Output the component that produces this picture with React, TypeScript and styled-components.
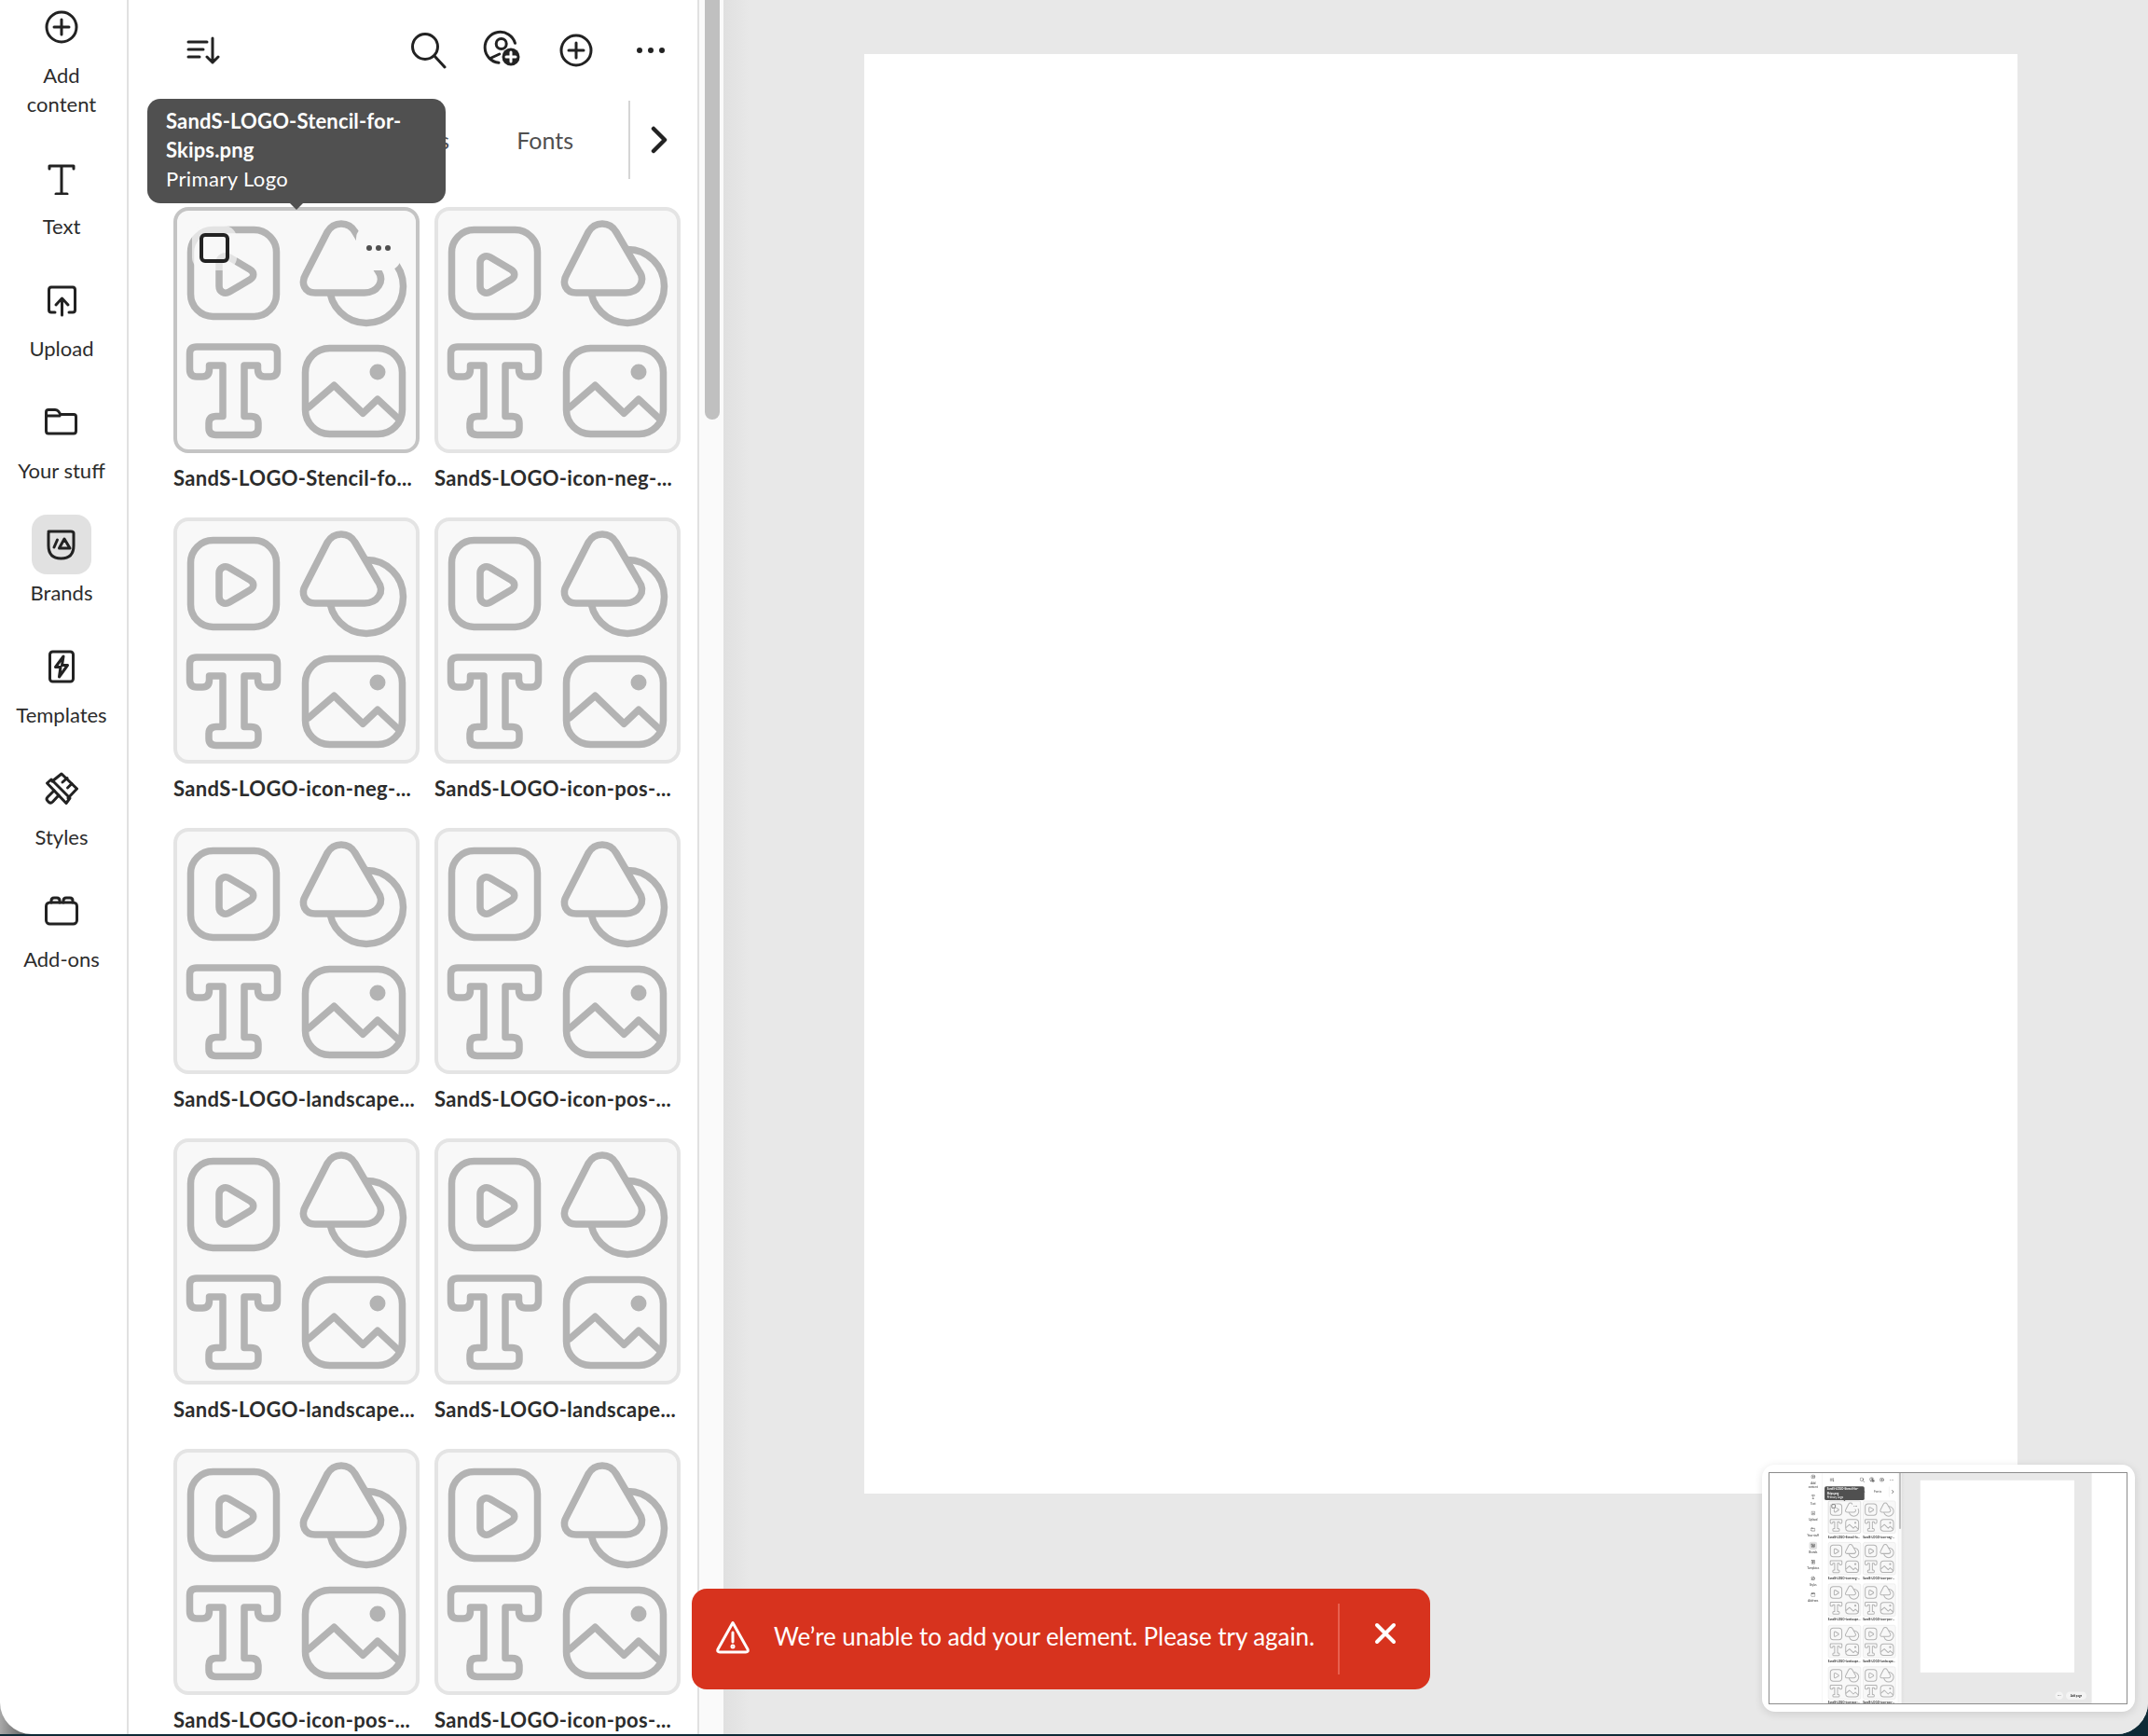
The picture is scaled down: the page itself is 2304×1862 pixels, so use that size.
import React from "react";
import styled, { createGlobalStyle } from "styled-components";

const Global = createGlobalStyle`
  html, body { margin: 0; padding: 0; background: #0e2a36; }
  * { box-sizing: border-box; }
  body { font-family: Lato, "Noto Sans", sans-serif; color: #2c2c2c; }
`;

const Stage = styled.div`
  position: relative;
  width: 2304px;
  height: 1862px;
  overflow: hidden;
  background:
    linear-gradient(90deg, #a8a8a8 0, #6a6a6a 24px, #0e2a36 46px, #0e2a36 100%) top / 100% 1860px no-repeat,
    #0e2a36;
`;
const Window = styled.div`
  position: relative;
  height: 1860px;
  overflow: hidden;
  background: #fff;
  border-radius: 0 0 34px 34px;
`;
const Layout = styled.div`
  display: flex;
  width: 2304px;
  height: 100%;
  background: #fff;
`;
const Rail = styled.nav`
  flex: 0 0 138px;
  padding-right: 4px;
  border-right: 2px solid #e1e1e1;
  display: flex;
  flex-direction: column;
  align-items: center;
  margin-top: -3px;
`;
const RailItem = styled.div`
  width: 100%;
  padding-bottom: 32px;
  display: flex;
  flex-direction: column;
  align-items: center;
`;
const RailIcon = styled.div<{ $active?: boolean }>`
  width: 64px;
  height: 64px;
  display: flex;
  align-items: center;
  justify-content: center;
  border-radius: 16px;
  background: ${(p) => (p.$active ? "#e1e1e1" : "transparent")};
`;
const RailLabel = styled.div`
  margin-top: 4px;
  font-size: 22px;
  line-height: 31px;
  text-align: center;
  color: #2c2c2c;
`;
const Glyph = styled.svg`
  display: block;
  fill: none;
  stroke: #222;
  stroke-width: 3;
  stroke-linecap: round;
  stroke-linejoin: round;
`;
const Panel = styled.section`
  position: relative;
  flex: 0 0 612px;
  border-right: 2px solid #e1e1e1;
  display: flex;
  flex-direction: column;
  overflow: hidden;
`;
const PanelHead = styled.header`
  flex: 0 0 108px;
  display: flex;
  align-items: center;
  padding: 0 33px 0 62px;
`;
const HeadActions = styled.div`
  margin-left: auto;
  display: flex;
  align-items: center;
  gap: 38px;
  & > svg:last-child { margin-left: 7px; }
`;
const Tabs = styled.div`
  flex: 0 0 84px;
  display: flex;
  align-items: center;
  justify-content: flex-end;
  padding-right: 31px;
`;
const TabLabel = styled.span`
  font-size: 25px;
  color: #505050;
  margin-right: 72px;
  &:last-of-type { margin-right: 59px; }
`;
const TabDivider = styled.div`
  align-self: stretch;
  width: 2px;
  background: #d5d5d5;
  margin-right: 21px;
`;
const Grid = styled.div`
  margin-top: 30px;
  padding-left: 48px;
  display: grid;
  grid-template-columns: 264px 264px;
  grid-auto-rows: 333px;
  column-gap: 16px;
`;
const Tile = styled.article`
  min-width: 0;
`;
const Thumb = styled.div<{ $hover?: boolean }>`
  position: relative;
  width: 264px;
  height: 264px;
  border-radius: 16px;
  background: #f8f8f8;
  border: 4px solid ${(p) => (p.$hover ? "#c4c4c4" : "#e4e4e4")};
`;
const ThumbArt = styled.svg`
  position: absolute;
  left: -4px;
  top: -4px;
  fill: none;
  stroke: #b3b3b3;
  stroke-width: 7.5;
  stroke-linejoin: round;
  stroke-linecap: round;
`;
const Halo = styled.div<{ $side: "left" | "right" }>`
  position: absolute;
  top: 16px;
  ${(p) => (p.$side === "left" ? "left: 16px;" : "right: 16px;")}
  width: 48px;
  height: 48px;
  border-radius: 14px;
  display: flex;
  align-items: center;
  justify-content: center;
  background: ${(p) => (p.$side === "left" ? "rgba(248,248,248,.7)" : "#f8f8f8")};
`;
const Check = styled.div`
  width: 32px;
  height: 32px;
  border: 4px solid #222;
  border-radius: 6px;
`;
const MoreDots = styled.div`
  display: flex;
  gap: 4px;
`;
const Dot = styled.i`
  width: 6px;
  height: 6px;
  border-radius: 50%;
  background: #505050;
`;
const TileName = styled.div`
  margin-top: 13px;
  font-size: 22px;
  letter-spacing: 0.32px;
  line-height: 28px;
  font-weight: 700;
  color: #2c2c2c;
  white-space: nowrap;
`;
const Tooltip = styled.div`
  position: absolute;
  left: 20px;
  top: 106px;
  width: 320px;
  height: 112px;
  padding: 8px 20px;
  background: #505050;
  border-radius: 14px;
  color: #fff;
  font-size: 22px;
  letter-spacing: 0.15px;
  line-height: 31px;
  &::after {
    content: "";
    position: absolute;
    left: 152px;
    bottom: -7px;
    border: 8px solid transparent;
    border-bottom: 0;
    border-top-color: #505050;
  }
`;
const TipName = styled.div`
  font-weight: 700;
`;
const TipGroup = styled.div`
  letter-spacing: 0.4px;
`;
const Track = styled.div`
  flex: 0 0 26px;
  padding: 0 4px 0 6px;
  background: #fafafa;
`;
const TrackThumb = styled.div`
  width: 16px;
  height: 450px;
  background: #c0c0c0;
  border-radius: 0 0 8px 8px;
`;
const Canvas = styled.main`
  position: relative;
  flex: 1;
  padding: 58px 0 0 151px;
  background: linear-gradient(90deg, #e0e0e0 0, #e8e8e8 28px);
`;
const Sheet = styled.div`
  width: 1237px;
  height: 1544px;
  background: #fff;
`;
const PageControls = styled.div`
  position: absolute;
  right: 42px;
  bottom: 42px;
  display: flex;
  align-items: center;
  gap: 22px;
`;
const RoundButton = styled.div`
  width: 64px;
  height: 64px;
  border-radius: 50%;
  background: #f4f4f4;
  display: flex;
  align-items: center;
  justify-content: center;
  gap: 4px;
`;
const PillButton = styled.div`
  height: 64px;
  width: 165px;
  border-radius: 32px;
  background: #f4f4f4;
  font-size: 22px;
  font-weight: 700;
  display: flex;
  align-items: center;
  justify-content: center;
`;
const Toast = styled.div`
  position: absolute;
  left: 742px;
  top: 1704px;
  width: 792px;
  height: 108px;
  padding: 16px 0 20px 26px;
  display: flex;
  align-items: center;
  background: #d7331e;
  border-radius: 16px;
  color: #fff;
`;
const ToastText = styled.div`
  margin: 0 0 2px 26px;
  font-size: 26px;
  letter-spacing: -0.05px;
  white-space: nowrap;
`;
const ToastDivider = styled.div`
  position: absolute;
  left: 693px;
  top: 16px;
  bottom: 16px;
  width: 2px;
  background: #e8604f;
`;
const ToastClose = styled.div`
  position: absolute;
  left: 732px;
  top: 36px;
  width: 24px;
  height: 24px;
`;
const Dock = styled.aside`
  position: absolute;
  right: 14px;
  top: 1571px;
  width: 400px;
  height: 265px;
  padding: 9px 9px 9px 8px;
  background: #fff;
  border-radius: 14px;
  box-shadow: 0 2px 10px rgba(0, 0, 0, 0.12);
`;
const DockFrame = styled.div`
  position: relative;
  width: 383px;
  height: 247px;
  overflow: hidden;
  background: #fff;
  outline: 1px solid #8c8c8c;
`;
const DockShot = styled.div`
  position: absolute;
  left: 38px;
  top: 0;
  width: 2304px;
  height: 1862px;
  transform: scale(0.1335);
  transform-origin: top left;
  filter: blur(2.5px);
`;

const rail = [
  { label: ["Add", "content"], icon: "add" },
  { label: ["Text"], icon: "text" },
  { label: ["Upload"], icon: "upload" },
  { label: ["Your stuff"], icon: "folder" },
  { label: ["Brands"], icon: "brand", active: true },
  { label: ["Templates"], icon: "template" },
  { label: ["Styles"], icon: "brush" },
  { label: ["Add-ons"], icon: "addon" },
];

const RailGlyph = ({ name }: { name: string }) => {
  const body: Record<string, React.ReactNode> = {
    add: (
      <>
        <circle cx="18" cy="18" r="16" />
        <path d="M18 10V26M10 18H26" />
      </>
    ),
    text: <path d="M5 8V5H31V8M18 5V35M12 35H24" />,
    upload: (
      <path d="M11 31H7Q4.500 31 4.500 28.500V7Q4.500 4 7 4H30Q32.500 4 32.500 7V28.500Q32.500 31 30 31H26M18.500 34V17M12 23L18.500 16L25 23" />
    ),
    folder: (
      <path d="M1.500 26V7Q1.500 4.500 4 4.500H11Q13 4.500 14.500 6L17 9.500H31Q33.500 9.500 33.500 12V27Q33.500 30 31 30H4Q1.500 30 1.500 27ZM1.500 11H16" />
    ),
    brand: (
      <>
        <path d="M5 5H29Q32 5 32 7V20Q32 34 18.500 34Q5 34 5 20V7Q5 5 7 5Z" transform="translate(-1 -1)" />
        <path d="M10 21L13.500 13M21 12L27 22H15.500Z" />
      </>
    ),
    template: (
      <>
        <rect x="5.500" y="2" width="25" height="32" rx="3" />
        <path d="M20 7L11.500 18.500H17L15.500 29L24.500 16.500H18.500Z" />
      </>
    ),
    brush: (
      <>
        <path d="M8 10L18 2L34.500 18L25 28" />
        <path d="M2.500 12L7 8L27 28L23 33.500Z" />
        <path d="M10 20L3 27Q1 29 3 31L4.500 32.500Q6.500 34 8.500 32L15 25M19 11L24 6.500M24.500 17L29 12.500" />
      </>
    ),
    addon: (
      <>
        <rect x="1.500" y="9" width="33" height="23" rx="4" />
        <path d="M7 9V7Q7 4 10 4H13Q16 4 16 7V9M20 9V7Q20 4 23 4H27Q30 4 30 7V9" />
      </>
    ),
  };
  return (
    <Glyph width="36" height="36" viewBox="0 0 36 36">
      {body[name]}
    </Glyph>
  );
};

const Art = () => (
  <ThumbArt width="264" height="264" viewBox="0 0 264 264">
    <rect x="18.500" y="24.500" width="92" height="93" rx="24" />
    <path d="M49 60C49 54 55 51 60 54L82 67C87 70 87 75 82 78L60 91C55 94 49 91 49 85Z" />
    <circle cx="207" cy="85" r="39.500" />
    <path
      d="M165 27C172 15 188 15 195 27L219 68C228 80 218 92 205 92L152 92C141 92 136 82 142 72Z"
      fill="#f8f8f8"
    />
    <path d="M25 150H104Q111.500 150 111.500 157V174Q111.500 182 104 182H98Q90.500 182 90.500 174V170H76V224.500H83Q91 224.500 91 232V237Q91 244.500 83 244.500H46Q38 244.500 38 237V232Q38 224.500 46 224.500H53V170H38.500V174Q38.500 182 31 182H25Q17.500 182 17.500 174V157Q17.500 150 25 150Z" />
    <rect x="141.500" y="151.500" width="104" height="92" rx="26" />
    <circle cx="219" cy="177" r="8.500" fill="#b3b3b3" stroke="none" />
    <path d="M145 215L172.300 191.300L203.300 221.300L219 206.300L242.300 228" />
  </ThumbArt>
);

const tiles = [
  "SandS-LOGO-Stencil-fo...",
  "SandS-LOGO-icon-neg-...",
  "SandS-LOGO-icon-neg-...",
  "SandS-LOGO-icon-pos-...",
  "SandS-LOGO-landscape...",
  "SandS-LOGO-icon-pos-...",
  "SandS-LOGO-landscape...",
  "SandS-LOGO-landscape...",
  "SandS-LOGO-icon-pos-...",
  "SandS-LOGO-icon-pos-...",
];

const Workspace = () => (
  <Layout>
    <Rail>
      {rail.map((r) => (
        <RailItem key={r.icon}>
          <RailIcon $active={r.active}>
            <RailGlyph name={r.icon} />
          </RailIcon>
          <RailLabel>
            {r.label.map((l) => (
              <div key={l}>{l}</div>
            ))}
          </RailLabel>
        </RailItem>
      ))}
    </Rail>
    <Panel>
      <PanelHead>
        <Glyph width="36" height="30" viewBox="0 0 36 30">
          <path d="M2 6H22M2 14H18M2 22H14M28 2V28M22 22L28 28L34 22" />
        </Glyph>
        <HeadActions>
          <Glyph width="40" height="40" viewBox="0 0 40 40">
            <circle cx="16" cy="16" r="13.500" />
            <path d="M26 26L37 38" />
          </Glyph>
          <Glyph width="44" height="44" viewBox="0 0 44 44">
            <path d="M34.500 14.300A16.500 16.500 0 1 0 17 35.300" />
            <circle cx="19.700" cy="15" r="5.500" />
            <path d="M17.700 26L9 30" />
            <circle cx="30" cy="29" r="9.500" fill="#222" stroke="none" />
            <path d="M30 24V34M25 29H35" stroke="#fff" />
          </Glyph>
          <Glyph width="36" height="36" viewBox="0 0 36 36">
            <circle cx="18" cy="18" r="16" />
            <path d="M18 10V26M10 18H26" />
          </Glyph>
          <Glyph width="34" height="10" viewBox="0 0 34 10">
            <circle cx="5" cy="5" r="3" fill="#222" stroke="none" />
            <circle cx="17" cy="5" r="3" fill="#222" stroke="none" />
            <circle cx="29" cy="5" r="3" fill="#222" stroke="none" />
          </Glyph>
        </HeadActions>
      </PanelHead>
      <Tabs>
        <TabLabel>Colors</TabLabel>
        <TabLabel>Fonts</TabLabel>
        <TabDivider />
        <Glyph width="20" height="30" viewBox="0 0 20 30" style={{ strokeWidth: 4.5 }}>
          <path d="M4 3L16 15L4 27" />
        </Glyph>
      </Tabs>
      <Grid>
        {tiles.map((name, i) => (
          <Tile key={i}>
            <Thumb $hover={i === 0}>
              <Art />
              {i === 0 && (
                <>
                  <Halo $side="left">
                    <Check />
                  </Halo>
                  <Halo $side="right">
                    <MoreDots>
                      <Dot />
                      <Dot />
                      <Dot />
                    </MoreDots>
                  </Halo>
                </>
              )}
            </Thumb>
            <TileName>{name}</TileName>
          </Tile>
        ))}
      </Grid>
      <Tooltip>
        <TipName>SandS-LOGO-Stencil-for-</TipName>
        <TipName>Skips.png</TipName>
        <TipGroup>Primary Logo</TipGroup>
      </Tooltip>
    </Panel>
    <Track>
      <TrackThumb />
    </Track>
    <Canvas>
      <Sheet />
      <PageControls>
        <RoundButton>
          <Dot />
          <Dot />
          <Dot />
        </RoundButton>
        <PillButton>Add page</PillButton>
      </PageControls>
    </Canvas>
  </Layout>
);

export default function App() {
  return (
    <Stage>
      <Global />
      <Window>
        <Workspace />
        <Toast>
          <Glyph width="36" height="36" viewBox="0 0 36 36" style={{ stroke: "#fff" }}>
            <path d="M18 2.500L34 31Q35 34 32 34H4Q1 34 2 31ZM18 13V23" />
            <circle cx="18" cy="28" r="1" />
          </Glyph>
          <ToastText>We’re unable to add your element. Please try again.</ToastText>
          <ToastDivider />
          <ToastClose>
            <Glyph width="24" height="24" viewBox="0 0 24 24" style={{ stroke: "#fff", strokeWidth: 4 }}>
              <path d="M3 3L21 21M21 3L3 21" />
            </Glyph>
          </ToastClose>
        </Toast>
        <Dock>
          <DockFrame>
            <DockShot>
              <Workspace />
            </DockShot>
          </DockFrame>
        </Dock>
      </Window>
    </Stage>
  );
}
